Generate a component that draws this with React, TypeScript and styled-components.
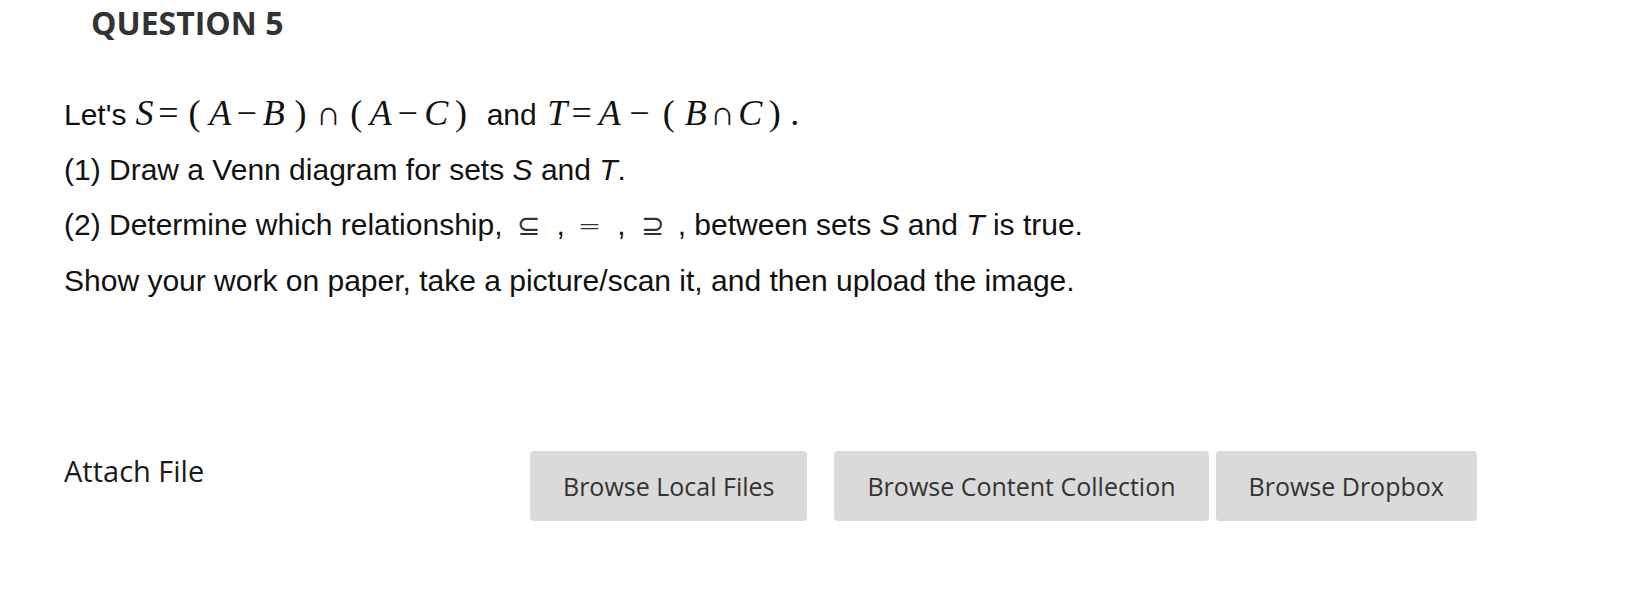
import React from "react";
import styled, { createGlobalStyle } from "styled-components";

const Global = createGlobalStyle`
  html, body { margin: 0; padding: 0; background: #ffffff; }
  body { font-family: "Liberation Sans", Arial, sans-serif; }
`;

const Page = styled.div`
  padding: 3px 0 0 64px;
  width: 1629px;
  height: 596px;
  box-sizing: border-box;
  overflow: hidden;
`;

const Heading = styled.h2`
  margin: 0 0 0 27px;
  font-family: "Open Sans", sans-serif;
  font-weight: 700;
  font-size: 32px;
  line-height: 40px;
  color: #333333;
`;

const Question = styled.div`
  margin-top: 43px;
  color: #111111;
`;

const Line = styled.p`
  margin: 0;
  font-family: "Liberation Sans", Arial, sans-serif;
  font-size: 30px;
  line-height: 55px;
  white-space: nowrap;
`;

const It = styled.i`
  font-style: italic;
`;

const Math = styled.span<{ $ml?: number }>`
  display: inline-block;
  margin-left: ${(p) => p.$ml ?? 0}px;
  font-family: "Liberation Serif", "DejaVu Serif", serif;
  font-size: 36px;
  line-height: 55px;
  color: #111111;
`;

const Tok = styled.span<{ $w: number; $italic?: boolean; $sans?: boolean }>`
  display: inline-block;
  width: ${(p) => p.$w}px;
  text-align: center;
  font-style: ${(p) => (p.$italic ? "italic" : "normal")};
  ${(p) =>
    p.$sans
      ? `font-family: "DejaVu Sans", sans-serif; font-weight: 200; font-size: 34px;`
      : ""}
`;

const Word = styled.span<{ $ml?: number }>`
  display: inline-block;
  margin-left: ${(p) => p.$ml ?? 0}px;
`;

const Sym = styled.span<{ $ml?: number }>`
  display: inline-block;
  margin-left: ${(p) => p.$ml ?? 0}px;
  font-family: "DejaVu Sans", sans-serif;
  font-weight: 200;
  font-size: 28px;
  color: #333333;
`;

const Punct = styled.span<{ $ml?: number }>`
  display: inline-block;
  margin-left: ${(p) => p.$ml ?? 0}px;
`;

const AttachRow = styled.div`
  display: flex;
  align-items: flex-start;
  margin-top: 143px;
`;

const AttachLabel = styled.div`
  width: 466px;
  font-family: "Open Sans", sans-serif;
  font-size: 29px;
  line-height: 40px;
  color: #1a1a1a;
`;

const Buttons = styled.div`
  display: flex;
`;

const BrowseButton = styled.button<{ $ml?: number }>`
  height: 70px;
  margin-left: ${(p) => p.$ml ?? 0}px;
  padding: 0 33px;
  border: none;
  border-radius: 4px;
  background: #dadada;
  color: #333333;
  font-family: "Open Sans", sans-serif;
  font-size: 25px;
  white-space: nowrap;
  cursor: pointer;
`;

export default function App() {
  return (
    <Page>
      <Global />
      <Heading>QUESTION 5</Heading>
      <Question>
        <Line>
          Let's
          <Math $ml={7}>
            <Tok $w={22} $italic>S</Tok>
            <Tok $w={25.75}>=</Tok>
            <Tok $w={26.75}>(</Tok>
            <Tok $w={24.75} $italic>A</Tok>
            <Tok $w={27.75}>−</Tok>
            <Tok $w={26.75} $italic>B</Tok>
            <Tok $w={26.75}>)</Tok>
            <Tok $w={29.5} $sans>∩</Tok>
            <Tok $w={25.5}>(</Tok>
            <Tok $w={23.75} $italic>A</Tok>
            <Tok $w={29.75}>−</Tok>
            <Tok $w={27.75} $italic>C</Tok>
            <Tok $w={21.5}>)</Tok>
          </Math>
          <Word $ml={15}>and</Word>
          <Math $ml={9.5}>
            <Tok $w={22} $italic>T</Tok>
            <Tok $w={26.75}>=</Tok>
            <Tok $w={29.5} $italic>A</Tok>
            <Tok $w={30}>−</Tok>
            <Tok $w={28.25}>(</Tok>
            <Tok $w={25.75} $italic>B</Tok>
            <Tok $w={28.25} $sans>∩</Tok>
            <Tok $w={27} $italic>C</Tok>
            <Tok $w={21.75}>)</Tok>
            <Tok $w={18.5}>.</Tok>
          </Math>
        </Line>
        <Line>
          (1) Draw a Venn diagram for sets <It>S</It> and <It>T</It>.
        </Line>
        <Line>
          (2) Determine which relationship,
          <Sym $ml={14}>⊆</Sym>
          <Punct $ml={17}>,</Punct>
          <Sym $ml={13}>=</Sym>
          <Punct $ml={16}>,</Punct>
          <Sym $ml={15}>⊇</Sym>
          <Punct $ml={14}>,</Punct> between sets <It>S</It> and <It>T</It> is true.
        </Line>
        <Line>Show your work on paper, take a picture/scan it, and then upload the image.</Line>
      </Question>
      <AttachRow>
        <AttachLabel>Attach File</AttachLabel>
        <Buttons>
          <BrowseButton>Browse Local Files</BrowseButton>
          <BrowseButton $ml={27}>Browse Content Collection</BrowseButton>
          <BrowseButton $ml={7}>Browse Dropbox</BrowseButton>
        </Buttons>
      </AttachRow>
    </Page>
  );
}
